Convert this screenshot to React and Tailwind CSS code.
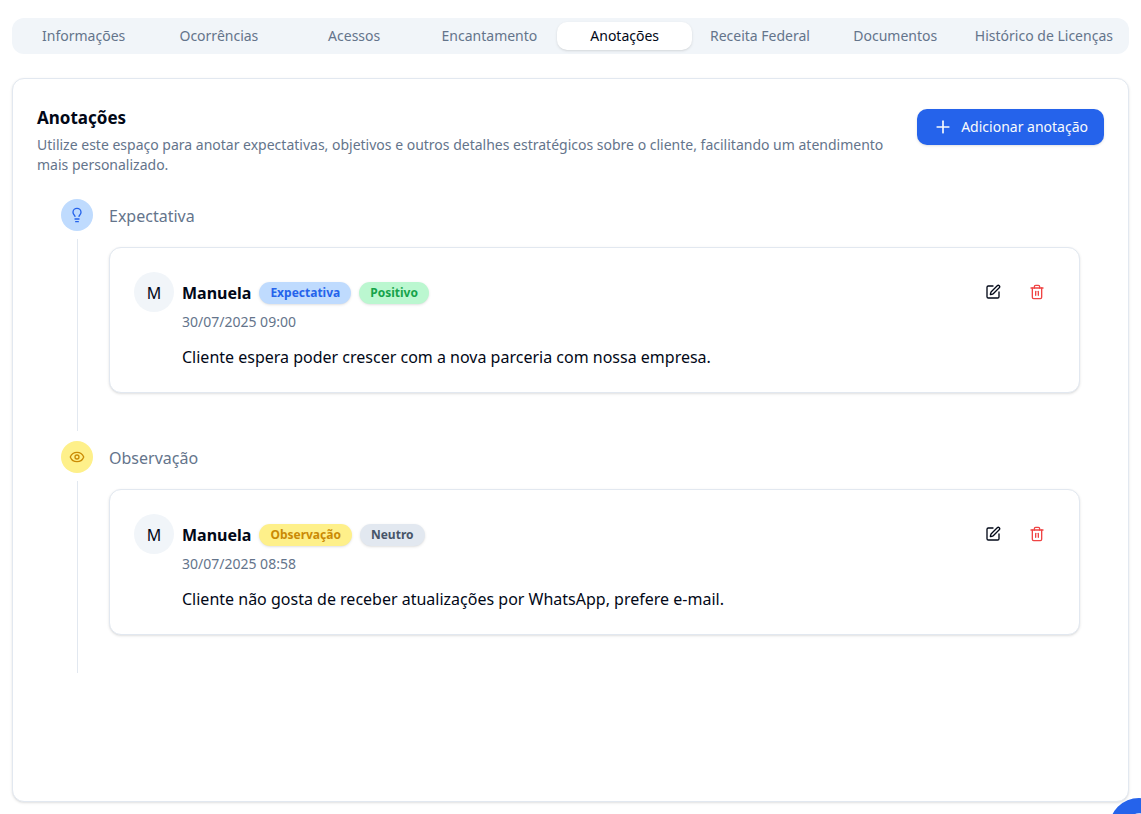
import React, { useState } from 'react';
import { Eye, Lightbulb, MessageCircle, Plus, SquarePen, Trash2 } from 'lucide-react';

const tabs = [
    'Informações',
    'Ocorrências',
    'Acessos',
    'Encantamento',
    'Anotações',
    'Receita Federal',
    'Documentos',
    'Histórico de Licenças',
];

const types = {
    expectativa: { label: 'Expectativa', icon: Lightbulb, color: 'bg-[#bfdbfe] text-[#2563eb]' },
    observacao: { label: 'Observação', icon: Eye, color: 'bg-[#fef08a] text-[#ca8a04]' },
};

const feelings = {
    positivo: { label: 'Positivo', color: 'bg-[#bbf7d0] text-[#16a34a]' },
    neutro: { label: 'Neutro', color: 'bg-[#e2e8f0] text-[#475569]' },
};

const notes = [
    {
        id: 1,
        author: 'Manuela',
        type: 'expectativa',
        feeling: 'positivo',
        date: '30/07/2025 09:00',
        text: 'Cliente espera poder crescer com a nova parceria com nossa empresa.',
    },
    {
        id: 2,
        author: 'Manuela',
        type: 'observacao',
        feeling: 'neutro',
        date: '30/07/2025 08:58',
        text: 'Cliente não gosta de receber atualizações por WhatsApp, prefere e-mail.',
    },
];

const Badge = ({ color, children }) => (
    <span className={`rounded-full px-[11px] py-[3px] text-xs font-bold shadow-sm ${color}`}>
        {children}
    </span>
);

const NoteCard = ({ note }) => {
    const type = types[note.type];
    const feeling = feelings[note.feeling];

    return (
        <article className="flex items-start gap-2 rounded-xl border border-[#e2e8f0] bg-white px-6 pt-6 pb-[23px] shadow-sm">
            <div className="flex size-10 shrink-0 items-center justify-center rounded-full bg-[#f1f5f9] pt-[2px]">
                {note.author[0]}
            </div>
            <div className="flex-1 pt-[9px]">
                <div className="flex flex-wrap items-center gap-2">
                    <h3 className="font-bold">{note.author}</h3>
                    <Badge color={type.color}>{type.label}</Badge>
                    <Badge color={feeling.color}>{feeling.label}</Badge>
                </div>
                <p className="mt-[7px] text-sm text-[#64748b]">{note.date}</p>
                <p className="mt-[13px]">{note.text}</p>
            </div>
            <div className="flex h-10 items-center gap-2">
                <button aria-label="Editar" className="flex size-9 items-center justify-center rounded-[10px] hover:bg-[#f1f5f9]">
                    <SquarePen size={16} />
                </button>
                <button aria-label="Excluir" className="flex size-9 items-center justify-center rounded-[10px] text-[#ef4444] hover:bg-[#f1f5f9]">
                    <Trash2 size={16} />
                </button>
            </div>
        </article>
    );
};

const TimelineItem = ({ note }) => {
    const { label, icon: Icon, color } = types[note.type];

    return (
        <li className="flex gap-4">
            <div className="flex flex-col items-center gap-2">
                <div className={`flex size-8 items-center justify-center rounded-full ${color}`}>
                    <Icon size={16} />
                </div>
                <div className="w-px flex-1 bg-[#e2e8f0]" />
            </div>
            <div className="flex-1 pt-[5px] pb-[38px]">
                <h2 className="mb-[19px] text-[#64748b]">{label}</h2>
                <NoteCard note={note} />
            </div>
        </li>
    );
};

export default function App() {
    const [activeTab, setActiveTab] = useState('Anotações');

    return (
        <div className="flex min-h-screen flex-col bg-white px-3 pt-[18px] pb-3 font-['Noto_Sans',sans-serif] text-[#020817]">
            <nav role="tablist" className="flex rounded-xl bg-[#f1f5f9] p-1 text-sm">
                {tabs.map(tab => (
                    <button
                        key={tab}
                        role="tab"
                        aria-selected={tab === activeTab}
                        onClick={() => setActiveTab(tab)}
                        className={`flex-1 rounded-[10px] px-3 py-1 whitespace-nowrap ${tab === activeTab ? 'bg-white text-[#020817] shadow-sm' : 'text-[#64748b]'}`}
                    >
                        {tab}
                    </button>
                ))}
            </nav>

            <main className="mt-6 flex-1 rounded-xl border border-[#e2e8f0] bg-white p-6 shadow-sm">
                <header className="flex items-start justify-between gap-8 pt-[6px]">
                    <div>
                        <h1 className="text-[17px] leading-[18px] font-bold">Anotações</h1>
                        <p className="mt-2 text-sm text-[#64748b]">
                            Utilize este espaço para anotar expectativas, objetivos e outros detalhes estratégicos sobre o cliente, facilitando um atendimento mais personalizado.
                        </p>
                    </div>
                    <button className="flex h-9 shrink-0 items-center gap-2 rounded-[10px] bg-[#2563eb] px-4 text-sm text-[#f8fafc] shadow-sm hover:bg-[#1d4ed8]">
                        <Plus size={20} />
                        Adicionar anotação
                    </button>
                </header>

                <ul className="mt-6 flex flex-col gap-[10px] px-6">
                    {notes.map(note => (
                        <TimelineItem key={note.id} note={note} />
                    ))}
                </ul>
            </main>

            {/* Floating chat button, partly off screen */}
            <button aria-label="Chat" className="fixed -right-7 -bottom-11 flex size-[60px] items-center justify-center rounded-full bg-[#2563eb] text-white">
                <MessageCircle size={32} />
            </button>
        </div>
    );
}
